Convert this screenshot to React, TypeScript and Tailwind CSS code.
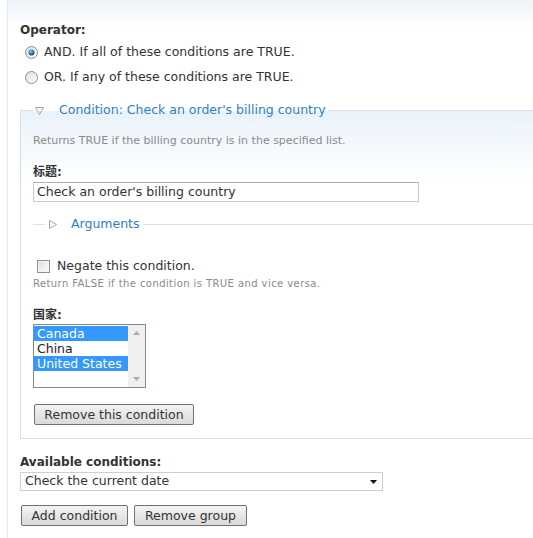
import React from "react";

const font = { fontFamily: '"DejaVu Sans", "Noto Sans CJK SC", sans-serif' };

function Radio({ checked }: { checked?: boolean }) {
  return (
    <svg width="13" height="13" viewBox="0 0 13 13" className="shrink-0">
      <defs>
        <linearGradient id={checked ? "rg1" : "rg0"} x1="0" y1="0" x2="1" y2="1">
          <stop offset="0" stopColor="#dcdcdc" />
          <stop offset="1" stopColor="#ffffff" />
        </linearGradient>
        <radialGradient id="dot" cx="0.4" cy="0.35" r="0.7">
          <stop offset="0" stopColor="#9fd3f7" />
          <stop offset="0.5" stopColor="#2a7fc0" />
          <stop offset="1" stopColor="#0d3f6b" />
        </radialGradient>
      </defs>
      <circle cx="6.5" cy="6.5" r="6" fill={`url(#${checked ? "rg1" : "rg0"})`} stroke="#8e8f8f" strokeWidth="1" />
      {checked && <circle cx="6.5" cy="6.5" r="3" fill="url(#dot)" />}
    </svg>
  );
}

function Btn({ children, w }: { children: React.ReactNode; w: string }) {
  return (
    <button
      className={`${w} h-[21px] rounded-[2px] border border-[#707070] bg-gradient-to-b from-[#f3f3f3] to-[#dadada] text-[12.5px] leading-[19px] text-[#333] text-center`}
      style={font}
    >
      {children}
    </button>
  );
}

export default function App() {
  return (
    <div className="w-[533px] h-[538px] overflow-hidden bg-white pl-[7px] text-[#333]" style={font}>
      <div className="h-full border-l border-[#dfe7ef] bg-[linear-gradient(#eef4fa,#ffffff_26px)] pl-[12px] pt-[22px]">
        <div className="text-[12px] leading-[16px] font-bold">Operator:</div>
        <div className="mt-[2px]">
          <div className="flex h-[25px] items-center pl-[5px] text-[12.5px]">
            <Radio checked />
            <span className="ml-[6px]">AND. If all of these conditions are TRUE.</span>
          </div>
          <div className="flex h-[25px] items-center pl-[5px] text-[12.5px]">
            <Radio />
            <span className="ml-[6px]">OR. If any of these conditions are TRUE.</span>
          </div>
        </div>

        <fieldset className="mt-[12px] w-[540px] border border-[#d6e3ee] bg-[linear-gradient(#e9f2fa,#ffffff_70px)] pl-[12px] pb-[13px]">
          <legend className="flex h-[16px] items-center pl-[2px] pr-[2px]">
            <svg width="9" height="8" viewBox="0 0 9 8" className="mt-[2px]">
              <path d="M0.5 0.5 L8.5 0.5 L4.5 7.5 Z" fill="none" stroke="#a5a5a5" strokeWidth="1" />
            </svg>
            <span className="ml-[15px] text-[12.5px] leading-[16px] text-[#2b80c9]">
              Condition: Check an order's billing country
            </span>
          </legend>

          <div className="mt-[16px] text-[11px] leading-[14px] text-[#8a8a8a]">
            Returns TRUE if the billing country is in the specified list.
          </div>

          <div className="mt-[16px] text-[12px] leading-[16px] font-bold">标题:</div>
          <div className="mt-[2px] flex h-[20px] w-[386px] items-center border border-[#c9c9c9] border-t-[#aeaeae] bg-white pl-[3px] text-[12.5px]">
            Check an order's billing country
          </div>

          <div className="mt-[14px] flex h-[16px] items-center">
            <div className="h-px w-[12px] bg-[#d6e3ee]" />
            <svg width="8" height="9" viewBox="0 0 8 9" className="ml-[4px]">
              <path d="M0.5 0.5 L7.5 4.5 L0.5 8.5 Z" fill="none" stroke="#a5a5a5" strokeWidth="1" />
            </svg>
            <span className="ml-[13px] px-[1px] text-[12.5px] leading-[16px] text-[#2b80c9]">Arguments</span>
            <div className="ml-[2px] h-px flex-1 bg-[#d6e3ee]" />
          </div>

          <div className="mt-[26px] flex h-[16px] items-center pl-[4px] text-[12.5px]">
            <span className="h-[13px] w-[13px] shrink-0 border border-[#8e8f8f] bg-gradient-to-br from-[#dcdcdc] to-[#ffffff] shadow-[inset_0_0_0_1px_#f4f4f4]" />
            <span className="ml-[7px]">Negate this condition.</span>
          </div>
          <div className="mt-[3px] text-[10px] leading-[14px] tracking-[0.42px] text-[#8a8a8a]">
            Return FALSE if the condition is TRUE and vice versa.
          </div>

          <div className="mt-[16px] text-[12px] leading-[16px] font-bold">国家:</div>
          <div className="mt-[1px] flex h-[64px] w-[113px] border border-[#828790] bg-white">
            <div className="flex-1 pt-[1px] text-[12.5px] leading-[15px]">
              <div className="bg-[#3399ff] pl-[3px] text-white">Canada</div>
              <div className="pl-[3px] text-[#222]">China</div>
              <div className="bg-[#3399ff] pl-[3px] text-white">United States</div>
            </div>
            <div className="flex w-[17px] flex-col items-center justify-between bg-[#f0f0f0] py-[6px]">
              <svg width="7" height="4" viewBox="0 0 7 4">
                <path d="M0 4 L3.5 0 L7 4 Z" fill="#a9a9a9" />
              </svg>
              <svg width="7" height="4" viewBox="0 0 7 4">
                <path d="M0 0 L3.5 4 L7 0 Z" fill="#a9a9a9" />
              </svg>
            </div>
          </div>

          <div className="mt-[16px] flex pl-[1px]">
            <Btn w="w-[160px]">Remove this condition</Btn>
          </div>
        </fieldset>

        <div className="mt-[15px] text-[12px] leading-[16px] font-bold">Available conditions:</div>
        <div className="mt-[2px] flex h-[19px] w-[363px] items-center justify-between border border-[#cfcfcf] bg-white pl-[4px] pr-[4px] text-[12.5px]">
          <span>Check the current date</span>
          <svg width="7" height="4" viewBox="0 0 7 4" className="mr-[1px]">
            <path d="M0 0 L7 0 L3.5 4 Z" fill="#111" />
          </svg>
        </div>

        <div className="mt-[14px] flex gap-[6px] pl-[1px]">
          <Btn w="w-[107px]">Add condition</Btn>
          <Btn w="w-[113px]">Remove group</Btn>
        </div>
      </div>
    </div>
  );
}
